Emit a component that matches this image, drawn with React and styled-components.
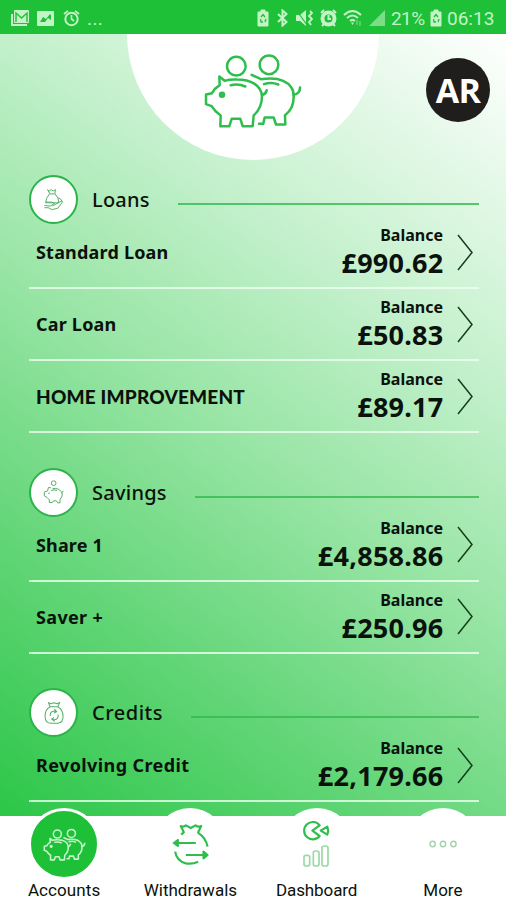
import React from "react";
import styled, { createGlobalStyle, ThemeProvider } from "styled-components";

const theme = {
  colors: {
    brand: "#1ec038",
    icon: "#2fbe4d",
    statusIcon: "#c4f3c6",
    black: "#0b120c",
    avatar: "#1f1e1c",
    white: "#fefffe",
  },
  fonts: {
    main: '"Noto Sans", "Open Sans", sans-serif',
    system: 'Roboto, "Liberation Sans", sans-serif',
  },
};

const GlobalStyle = createGlobalStyle`
  * {
    box-sizing: border-box;
  }

  body {
    margin: 0;
  }

  h2, h3, p, ul {
    margin: 0;
    padding: 0;
  }
`;

const Screen = styled.div`
  display: flex;
  flex-direction: column;
  width: 506px;
  height: 900px;
  overflow: hidden;
  background-color: ${({ theme }) => theme.colors.white};
  color: ${({ theme }) => theme.colors.black};
  font-family: ${({ theme }) => theme.fonts.main};
`;

const StatusBar = styled.div`
  display: flex;
  flex-shrink: 0;
  justify-content: space-between;
  height: 34px;
  padding: 2px 12px 0 10px;
  background-color: ${({ theme }) => theme.colors.brand};
  color: ${({ theme }) => theme.colors.statusIcon};
  font-family: ${({ theme }) => theme.fonts.system};
  font-size: 19px;
`;

const StatusGroup = styled.div`
  display: flex;
  align-items: center;
`;

const StatusIcon = styled.svg`
  display: block;
  width: ${({ $width }) => $width}px;
  height: ${({ $height }) => $height || 18}px;
  margin-right: ${({ $gap }) => $gap || 0}px;
  fill: none;
  stroke: currentColor;
  stroke-width: 2;
`;

const StatusText = styled.span`
  width: ${({ $width }) => $width}px;
  margin-right: ${({ $gap }) => $gap || 0}px;
  letter-spacing: ${({ $spacing }) => $spacing || 0}px;
  white-space: nowrap;
`;

const Content = styled.main`
  position: relative;
  flex: 1;
  min-height: 0;
  overflow: hidden;
  background: linear-gradient(
    216deg,
    #fbfefb 2%,
    #c6f1ce 30%,
    #98e5a5 52%,
    #61d576 76%,
    #2cc648 100%
  );
`;

const Hero = styled.header`
  display: flex;
  justify-content: center;
  width: 252px;
  height: 126px;
  margin: 0 auto 15px 127px;
  padding-top: 18px;
  border-radius: 0 0 126px 126px;
  background-color: ${({ theme }) => theme.colors.white};
  color: ${({ theme }) => theme.colors.icon};
`;

const Avatar = styled.div`
  position: absolute;
  top: 24px;
  right: 16px;
  display: flex;
  align-items: center;
  justify-content: center;
  width: 64px;
  height: 64px;
  border-radius: 50%;
  background-color: ${({ theme }) => theme.colors.avatar};
  color: ${({ theme }) => theme.colors.white};
  font-family: "Open Sans", sans-serif;
  font-size: 34px;
  font-weight: 700;
  letter-spacing: -0.8px;
`;

const Section = styled.section`
  margin: 0 27px 34.5px 29px;
`;

const SectionHeader = styled.div`
  display: flex;
  height: 42px;
`;

const SectionBadge = styled.div`
  display: flex;
  flex-shrink: 0;
  align-items: center;
  justify-content: center;
  width: 49px;
  height: 49px;
  margin-right: 14px;
  border: 2px solid #2bb449;
  border-radius: 50%;
  background-color: ${({ theme }) => theme.colors.white};
  color: #55b06a;
`;

const SectionTitle = styled.h2`
  margin-right: 28px;
  font-size: 20px;
  font-weight: 500;
  line-height: 50px;
  letter-spacing: ${({ $spacing }) => $spacing}px;
`;

const SectionLine = styled.div`
  flex: 1;
  height: 2px;
  margin-top: 28px;
  background-color: #35b950;
  opacity: 0.8;
`;

const AccountRow = styled.div`
  display: flex;
  align-items: center;
  height: 72px;
  padding: 0 6px 0 7px;
  border-bottom: 2px solid rgba(240, 255, 242, 0.78);
`;

const AccountName = styled.h3`
  flex: 1;
  font-family: ${({ $caps, theme }) =>
    $caps ? "Lato, sans-serif" : theme.fonts.main};
  font-size: ${({ $caps }) => ($caps ? 19 : 18)}px;
  font-weight: ${({ $caps }) => ($caps ? 900 : 700)};
  letter-spacing: ${({ $spacing }) => $spacing}px;
`;

const Balance = styled.div`
  margin-right: 14px;
  text-align: right;
`;

const BalanceLabel = styled.p`
  font-size: 16px;
  font-weight: 700;
  line-height: 22px;
`;

const BalanceAmount = styled.p`
  margin-right: -0.5px;
  font-size: 27px;
  font-weight: 700;
  line-height: 34px;
  letter-spacing: 0.25px;
`;

const Chevron = styled.svg`
  width: 16px;
  height: 37px;
  fill: none;
  stroke: #143d1b;
  stroke-width: 1.5;
`;

const TabBar = styled.nav`
  display: flex;
  flex-shrink: 0;
  justify-content: center;
  height: 84px;
  padding-left: 1px;
  background-color: ${({ theme }) => theme.colors.white};
`;

const Tab = styled.div`
  display: flex;
  flex-direction: column;
  align-items: center;
  width: 126.5px;
  margin-top: -8px;
  z-index: 1;
`;

const TabCircle = styled.div`
  display: flex;
  align-items: center;
  justify-content: center;
  width: 72px;
  height: 72px;
  border: 3px solid ${({ theme }) => theme.colors.white};
  border-radius: 50%;
  background-color: ${({ $active, theme }) =>
    $active ? theme.colors.brand : theme.colors.white};
  color: ${({ $active, theme }) => ($active ? "#c6f5cb" : theme.colors.icon)};
`;

const TabLabel = styled.span`
  font-family: ${({ theme }) => theme.fonts.system};
  font-size: 17px;
  line-height: 20px;
  letter-spacing: ${({ $spacing }) => $spacing}px;
`;

const LineIcon = styled.svg`
  display: block;
  flex-shrink: 0;
  fill: none;
  stroke: currentColor;
  stroke-linejoin: round;
`;

const PigsIcon = ({ width, height, strokeWidth }) => (
  <LineIcon
    width={width}
    height={height}
    viewBox="250 65 300 230"
    strokeWidth={strokeWidth}
    strokeLinecap="round"
  >
    <circle cx="350" cy="107" r="28" />
    <circle cx="448" cy="103" r="28" />
    <path d="M315 151 L299 138 L300 164 Q285 173 277 188 L259 192 L259 221 L276 227 Q286 244 303 255 L302 287 H329 L336 265 H362 L369 287 H399 L402 255 Q427 233 427 196 C423 164 394 147 352 147 Q330 146 315 151" />
    <path d="M333 164 Q357 159 377 168 M427 194 Q439 190 441 179" />
    <circle cx="307" cy="193" r="6" fill="currentColor" />
    <path d="M396 133 L424 146 Q492 136 515 171 Q522 180 522 196 C523 225 511 243 496 254 L497 282 H469 L462 261 H435 L431 280 H418" />
    <path d="M433 161 Q455 154 476 162 M522 193 Q541 190 541 171" />
  </LineIcon>
);

const LoanIcon = () => (
  <LineIcon width="21" height="23" viewBox="130 67 62 70" strokeWidth="3">
    <path d="M143 72 L148 76 L154 72 L160 76 L167 72 L165 85 H150 Z M149 85 Q138 97 137 112 H177 Q178 98 166 85" />
    <path d="M133 120 L151 122 L164 114 L156 110 H137 M157 122 L185 107 Q189 106 188 110 L175 128 L157 133 L145 127 H133" />
    <path d="M173 96 Q185 99 187 108" />
  </LineIcon>
);

const SavingsIcon = () => (
  <LineIcon width="21" height="24" viewBox="129 60 63 71" strokeWidth="3">
    <circle cx="161" cy="69" r="7" />
    <path d="M153 83 L145 82 L143 92 L133 96 V107 L141 112 L148 119 V127 H157 L160 122 H169 L173 128 H180 V118 Q192 103 183 94 Q176 83 158 85 M153 91 Q162 87 171 91 M185 99 L190 92" />
    <circle cx="147" cy="99" r="1" />
  </LineIcon>
);

const CreditIcon = () => (
  <LineIcon width="20" height="24" viewBox="131 93 58 70" strokeWidth="3">
    <path d="M143 97 L151 101 L160 98 L169 101 L177 97 L171 110 H149 L143 97 M149 110 C128 121 129 158 151 158 H171 C193 156 190 120 171 110" />
    <path d="M149 137 Q148 123 161 122 L168 125 M161 117 L168 124 L160 128 M172 132 Q174 146 161 148 L153 145 M160 141 L153 146 L162 152" />
  </LineIcon>
);

const WithdrawIcon = () => (
  <LineIcon width="37" height="43" viewBox="515 67 110 129" strokeWidth="6.5">
    <path d="M551 97 L541 76 Q549 81 556 74 L571 82 L585 74 Q593 81 602 76 L592 97" />
    <path d="M549 96 L542 102 M592 96 Q617 112 621 138 M524 153 Q528 181 556 188 Q576 191 593 183" />
    <path d="M586 127 H524 M556 163 H616" />
    <path
      d="M520 127 L532 118 V136 Z M621 163 L609 153 V173 Z"
      fill="currentColor"
    />
  </LineIcon>
);

const DashboardIcon = () => (
  <LineIcon width="29" height="48" viewBox="150 62 87 144" strokeWidth="6.5">
    <path d="M203 78 A26 26 0 1 0 203 110 L181 94 Z" />
    <path d="M206 94 L226 82 Q231 94 226 106 Z" />
    <g stroke="#9bd9a5" strokeWidth="5">
      <rect x="156" y="168" width="17" height="32" rx="6" />
      <rect x="184" y="155" width="17" height="45" rx="6" />
      <rect x="210" y="140" width="18" height="60" rx="6" />
    </g>
  </LineIcon>
);

const MoreIcon = () => (
  <LineIcon width="30" height="10" viewBox="0 0 30 10" strokeWidth="1.4">
    <g stroke="#a3d1aa">
      <circle cx="4.6" cy="5" r="2.7" />
      <circle cx="15" cy="5" r="2.7" />
      <circle cx="25.4" cy="5" r="2.7" />
    </g>
  </LineIcon>
);

const BatteryIcon = ({ gap }) => (
  <StatusIcon $width={12} $gap={gap} viewBox="0 0 12 18">
    <path
      d="M1 3 H4 V1 H8 V3 H11 V17 H1 Z"
      fill="currentColor"
      strokeWidth="1"
    />
    <path
      d="M4 8 L6 5.5 L8 8 M3.5 10 L4 13 H6 M8 13 L9 10"
      stroke="#1ec038"
      strokeWidth="1.3"
    />
  </StatusIcon>
);

const sections = [
  {
    title: "Loans",
    spacing: 0.2,
    icon: <LoanIcon />,
    accounts: [
      { name: "Standard Loan", balance: "£990.62", spacing: 0.2 },
      { name: "Car Loan", balance: "£50.83", spacing: 0.2 },
      {
        name: "HOME IMPROVEMENT",
        balance: "£89.17",
        spacing: 0.2,
        caps: true,
      },
    ],
  },
  {
    title: "Savings",
    spacing: 0.25,
    icon: <SavingsIcon />,
    accounts: [
      { name: "Share 1", balance: "£4,858.86", spacing: 0.15 },
      { name: "Saver +", balance: "£250.96", spacing: 0.35 },
    ],
  },
  {
    title: "Credits",
    spacing: 0.5,
    icon: <CreditIcon />,
    accounts: [
      { name: "Revolving Credit", balance: "£2,179.66", spacing: 0.4 },
    ],
  },
];

const tabs = [
  {
    label: "Accounts",
    spacing: 0.1,
    active: true,
    icon: <PigsIcon width={43} height={33} strokeWidth={11} />,
  },
  { label: "Withdrawals", spacing: 0, icon: <WithdrawIcon /> },
  { label: "Dashboard", spacing: -0.1, icon: <DashboardIcon /> },
  { label: "More", spacing: 0, icon: <MoreIcon /> },
];

const PhoneStatus = () => (
  <StatusBar>
    <StatusGroup>
      <StatusIcon $width={20} $gap={7} viewBox="0 0 20 18">
        <path d="M2 5 V16 H17" />
        <rect x="4" y="1" width="15" height="13" rx="1" fill="currentColor" stroke="none" />
        <path d="M6 13 V4 L11.5 9 L17 4 V13" stroke="#1ec038" strokeWidth="1.4" />
      </StatusIcon>
      <StatusIcon $width={17} $gap={9} viewBox="0 0 17 18">
        <rect x="0" y="2" width="17" height="15" rx="1" fill="currentColor" stroke="none" />
        <path
          d="M3 13 L6 8 L9 10 L13 5 L14 6 V11 L11 9 L8 13 Z"
          fill="#1ec038"
          stroke="none"
        />
      </StatusIcon>
      <StatusIcon $width={17} $gap={7} viewBox="0 0 17 18">
        <circle cx="8.5" cy="10" r="6.2" />
        <path d="M8.5 6 V10 L11 12 M1 5 L5 1.8 M12 1.8 L16 5" strokeWidth="1.7" />
      </StatusIcon>
      <StatusText $width={18} $spacing={0.4}>
        ...
      </StatusText>
    </StatusGroup>
    <StatusGroup>
      <BatteryIcon gap={8} />
      <StatusIcon $width={11} $gap={8} viewBox="0 0 11 18">
        <path d="M1 5 L9.5 13 L5.5 16.5 V1.5 L9.5 5 L1 13" />
      </StatusIcon>
      <StatusIcon $width={18} $gap={6} viewBox="0 0 18 18">
        <path d="M0 6 H4 L10 1 V17 L4 12 H0 Z" fill="currentColor" stroke="none" />
        <path d="M1 2 L11 16" stroke="#1ec038" strokeWidth="1.2" />
        <path d="M14 2 L16 4 L13 7 L16 10 L13 13 L15 16" strokeWidth="1.8" />
      </StatusIcon>
      <StatusIcon $width={17} $gap={6} viewBox="0 0 17 18">
        <circle cx="8.5" cy="9.5" r="7" fill="currentColor" />
        <circle cx="8.5" cy="9.5" r="4" fill="#1ec038" stroke="none" />
        <path d="M8.5 6 V10 H11 M1 4 L4 1 M13 1 L16 4 M2 17 L4 15 M15 17 L13 15" />
      </StatusIcon>
      <StatusIcon $width={20} $gap={6} viewBox="0 0 20 18">
        <path d="M1 6 Q9.5 -2 18 6 M4 9 Q9.5 4 15 9 M7 12 Q9.5 10 12 12" />
        <path d="M8 13.5 H11 L9.5 16 Z" fill="currentColor" stroke="none" />
        <path d="M14 11 V16 M17 12 V17" strokeWidth="1.3" opacity="0.5" />
      </StatusIcon>
      <StatusIcon $width={16} $gap={6} viewBox="0 0 16 18">
        <path d="M16 1 V17 H0 Z" fill="#7bdd88" stroke="none" />
      </StatusIcon>
      <StatusText $width={34} $gap={5} $spacing={-0.6}>
        21%
      </StatusText>
      <BatteryIcon gap={5} />
      <StatusText $width={47}>06:13</StatusText>
    </StatusGroup>
  </StatusBar>
);

const Account = ({ account: { name, balance, spacing, caps } }) => (
  <AccountRow>
    <AccountName $spacing={spacing} $caps={caps}>
      {name}
    </AccountName>
    <Balance>
      <BalanceLabel>Balance</BalanceLabel>
      <BalanceAmount>{balance}</BalanceAmount>
    </Balance>
    <Chevron viewBox="0 0 16 37">
      <path d="M1 1 L15 18.5 L1 36" />
    </Chevron>
  </AccountRow>
);

const App = () => {
  return (
    <ThemeProvider theme={theme}>
      <GlobalStyle />
      <Screen>
        <PhoneStatus />
        <Content>
          <Hero>
            <PigsIcon width={100} height={77} strokeWidth={7.5} />
          </Hero>
          <Avatar>AR</Avatar>
          {sections.map(({ title, spacing, icon, accounts }) => (
            <Section key={title}>
              <SectionHeader>
                <SectionBadge>{icon}</SectionBadge>
                <SectionTitle $spacing={spacing}>{title}</SectionTitle>
                <SectionLine />
              </SectionHeader>
              {accounts.map((account) => (
                <Account key={account.name} account={account} />
              ))}
            </Section>
          ))}
        </Content>
        <TabBar>
          {tabs.map(({ label, spacing, active, icon }) => (
            <Tab key={label}>
              <TabCircle $active={active}>{icon}</TabCircle>
              <TabLabel $spacing={spacing}>{label}</TabLabel>
            </Tab>
          ))}
        </TabBar>
      </Screen>
    </ThemeProvider>
  );
};

export default App;
